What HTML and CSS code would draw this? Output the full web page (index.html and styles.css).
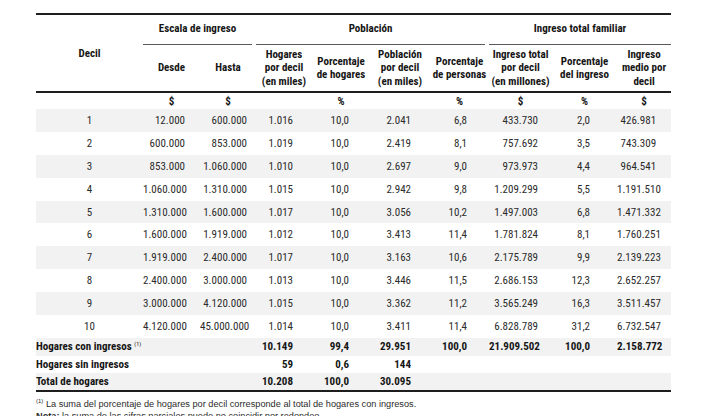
FILE: index.html
```html
<!DOCTYPE html>
<html lang="es">

<head>
    <meta charset="UTF-8">
    <meta name="viewport" content="width=device-width, initial-scale=1.0">
    <title>Distribución del ingreso por decil</title>
    <link rel="stylesheet" href="styles.css">
</head>

<body>
    <!-- TABLA -->
    <table class="Tabla">
        <colgroup>
            <col class="Tabla-col--decil">
            <col class="Tabla-col--desde">
            <col class="Tabla-col--hasta">
            <col class="Tabla-col--hogares">
            <col class="Tabla-col--pctHogares">
            <col class="Tabla-col--poblacion">
            <col class="Tabla-col--pctPersonas">
            <col class="Tabla-col--ingresoTotal">
            <col class="Tabla-col--pctIngreso">
            <col class="Tabla-col--ingresoMedio">
        </colgroup>
        <thead>
            <tr class="Tabla-grupos">
                <th rowspan="2" class="Tabla-decil">Decil</th>
                <th colspan="2"><div class="Tabla-grupo">Escala de ingreso</div></th>
                <th colspan="4"><div class="Tabla-grupo">Población</div></th>
                <th colspan="3"><div class="Tabla-grupo Tabla-grupo--ultimo">Ingreso total familiar</div></th>
            </tr>
            <tr class="Tabla-columnas">
                <th>Desde</th>
                <th>Hasta</th>
                <th>Hogares<br>por decil<br>(en miles)</th>
                <th>Porcentaje<br>de hogares</th>
                <th>Población<br>por decil<br>(en miles)</th>
                <th>Porcentaje<br>de personas</th>
                <th>Ingreso total<br>por decil<br>(en millones)</th>
                <th>Porcentaje<br>del ingreso</th>
                <th>Ingreso<br>medio por<br>decil</th>
            </tr>
        </thead>
        <tbody>
            <tr class="Tabla-unidades">
                <td></td><td>$</td><td>$</td><td></td><td>%</td><td></td><td>%</td><td>$</td><td>%</td><td>$</td>
            </tr>
            <tr class="Tabla-fila">
                <td>1</td><td>12.000</td><td>600.000</td><td>1.016</td><td>10,0</td><td>2.041</td><td>6,8</td><td>433.730</td><td>2,0</td><td>426.981</td>
            </tr>
            <tr class="Tabla-fila">
                <td>2</td><td>600.000</td><td>853.000</td><td>1.019</td><td>10,0</td><td>2.419</td><td>8,1</td><td>757.692</td><td>3,5</td><td>743.309</td>
            </tr>
            <tr class="Tabla-fila">
                <td>3</td><td>853.000</td><td>1.060.000</td><td>1.010</td><td>10,0</td><td>2.697</td><td>9,0</td><td>973.973</td><td>4,4</td><td>964.541</td>
            </tr>
            <tr class="Tabla-fila">
                <td>4</td><td>1.060.000</td><td>1.310.000</td><td>1.015</td><td>10,0</td><td>2.942</td><td>9,8</td><td>1.209.299</td><td>5,5</td><td>1.191.510</td>
            </tr>
            <tr class="Tabla-fila">
                <td>5</td><td>1.310.000</td><td>1.600.000</td><td>1.017</td><td>10,0</td><td>3.056</td><td>10,2</td><td>1.497.003</td><td>6,8</td><td>1.471.332</td>
            </tr>
            <tr class="Tabla-fila">
                <td>6</td><td>1.600.000</td><td>1.919.000</td><td>1.012</td><td>10,0</td><td>3.413</td><td>11,4</td><td>1.781.824</td><td>8,1</td><td>1.760.251</td>
            </tr>
            <tr class="Tabla-fila">
                <td>7</td><td>1.919.000</td><td>2.400.000</td><td>1.017</td><td>10,0</td><td>3.163</td><td>10,6</td><td>2.175.789</td><td>9,9</td><td>2.139.223</td>
            </tr>
            <tr class="Tabla-fila">
                <td>8</td><td>2.400.000</td><td>3.000.000</td><td>1.013</td><td>10,0</td><td>3.446</td><td>11,5</td><td>2.686.153</td><td>12,3</td><td>2.652.257</td>
            </tr>
            <tr class="Tabla-fila">
                <td>9</td><td>3.000.000</td><td>4.120.000</td><td>1.015</td><td>10,0</td><td>3.362</td><td>11,2</td><td>3.565.249</td><td>16,3</td><td>3.511.457</td>
            </tr>
            <tr class="Tabla-fila">
                <td>10</td><td>4.120.000</td><td>45.000.000</td><td>1.014</td><td>10,0</td><td>3.411</td><td>11,4</td><td>6.828.789</td><td>31,2</td><td>6.732.547</td>
            </tr>
        </tbody>
        <tfoot>
            <tr class="Tabla-total">
                <td colspan="3">Hogares con ingresos <sup class="Tabla-nota">(1)</sup></td>
                <td>10.149</td><td>99,4</td><td>29.951</td><td>100,0</td><td>21.909.502</td><td>100,0</td><td>2.158.772</td>
            </tr>
            <tr class="Tabla-total">
                <td colspan="3">Hogares sin ingresos</td>
                <td>59</td><td>0,6</td><td>144</td><td></td><td></td><td></td><td></td>
            </tr>
            <tr class="Tabla-total">
                <td colspan="3">Total de hogares</td>
                <td>10.208</td><td>100,0</td><td>30.095</td><td></td><td></td><td></td><td></td>
            </tr>
        </tfoot>
    </table>

    <!-- NOTAS -->
    <div class="Notas">
        <p><sup class="Notas-ref">(1)</sup> La suma del porcentaje de hogares por decil corresponde al total de hogares con ingresos.</p>
        <p><strong>Nota:</strong> la suma de las cifras parciales puede no coincidir por redondeo.</p>
    </div>
</body>

</html>
```

FILE: styles.css
```css
/* VARIABLES */
:root {
    --color-texto: #2b2b2b;
    --color-titulo: #151515;
    --color-franja: #f2f2f2;
    --color-linea: #1e1e1e;
    --color-linea-suave: #5a5a5a;
    --fuente-tabla: "Roboto Condensed", "Noto Sans Condensed", "Noto Sans", "DejaVu Sans Condensed", sans-serif;
}

/* RESET */
* {
    margin: 0;
    padding: 0;
    box-sizing: border-box;
}

body {
    background-color: #fff;
    color: var(--color-texto);
    font-family: "Liberation Sans", Arial, sans-serif;
    padding: 13px 0 0 36px;
}

/* TABLA */
.Tabla {
    width: 635px;
    table-layout: fixed;
    border-collapse: collapse;
    border-top: 2px solid var(--color-linea);
    font-family: var(--fuente-tabla);
    font-stretch: condensed;
    font-size: 11px;
}

.Tabla-col--decil { width: 107px; }
.Tabla-col--desde { width: 57px; }
.Tabla-col--hasta { width: 56px; }
.Tabla-col--hogares { width: 56px; }
.Tabla-col--pctHogares { width: 58px; }
.Tabla-col--poblacion { width: 60px; }
.Tabla-col--pctPersonas { width: 59px; }
.Tabla-col--ingresoTotal { width: 63px; }
.Tabla-col--pctIngreso { width: 65px; }
.Tabla-col--ingresoMedio { width: 54px; }

.Tabla th {
    font-weight: bold;
    color: var(--color-titulo);
    text-align: center;
    vertical-align: middle;
    padding: 0;
}

.Tabla-grupos th {
    height: 30px;
    vertical-align: bottom;
}

.Tabla-grupos .Tabla-decil {
    vertical-align: middle;
    border-bottom: 2px solid var(--color-linea);
}

.Tabla-grupo {
    height: 30px;
    line-height: 28px;
    margin-right: 4px;
    border-bottom: 1.5px solid var(--color-linea-suave);
}

.Tabla-grupo--ultimo {
    margin-right: 0;
}

.Tabla-columnas th {
    height: 47px;
    line-height: 13.5px;
    border-bottom: 2px solid var(--color-linea);
}

/* Unidades */
.Tabla-unidades td {
    height: 17px;
    text-align: center;
    font-weight: bold;
    color: var(--color-titulo);
}

/* Filas de datos */
.Tabla-fila td,
.Tabla-total td {
    text-align: right;
    white-space: nowrap;
}

.Tabla-fila td {
    height: 22.9px;
}

.Tabla-fila:nth-child(even) td,
.Tabla-total:nth-child(odd) td {
    background-color: var(--color-franja);
}

.Tabla-fila td:first-child {
    text-align: center;
}

.Tabla-fila td:nth-last-child(9) { padding-right: 15px; }
.Tabla-fila td:nth-last-child(8) { padding-right: 9px; }
.Tabla-fila td:nth-last-child(7),
.Tabla-total td:nth-last-child(7) { padding-right: 19px; }
.Tabla-fila td:nth-last-child(6),
.Tabla-total td:nth-last-child(6) { padding-right: 21px; }
.Tabla-fila td:nth-last-child(5),
.Tabla-total td:nth-last-child(5) { padding-right: 19px; }
.Tabla-fila td:nth-last-child(4),
.Tabla-total td:nth-last-child(4) { padding-right: 22px; }
.Tabla-fila td:nth-last-child(3),
.Tabla-total td:nth-last-child(3) { padding-right: 14px; }
.Tabla-fila td:nth-last-child(2),
.Tabla-total td:nth-last-child(2) { padding-right: 27px; }
.Tabla-fila td:nth-last-child(1),
.Tabla-total td:nth-last-child(1) { padding-right: 15px; }

/* Totales */
.Tabla-total td {
    height: 17.6px;
    font-weight: bold;
    color: var(--color-titulo);
}

.Tabla-total td:first-child {
    text-align: left;
}

.Tabla-total:last-child td {
    border-bottom: 2px solid var(--color-linea);
}

.Tabla-nota {
    font-size: 6px;
    font-weight: normal;
    vertical-align: 4px;
}

/* NOTAS */
.Notas {
    padding-top: 3px;
    font-size: 9.2px;
    line-height: 12px;
    color: var(--color-texto);
}

.Notas-ref {
    font-size: 6px;
    vertical-align: 4px;
}
```
